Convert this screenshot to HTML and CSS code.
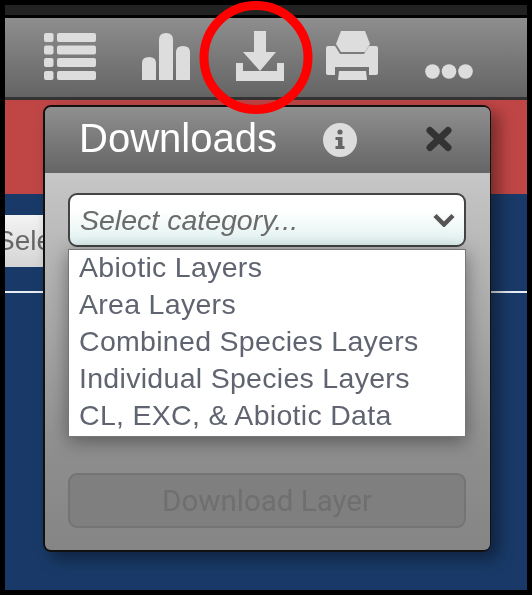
FILE: index.html
```html
<!DOCTYPE html>
<html lang="en">
<head>
    <meta charset="UTF-8">
    <title>Downloads</title>
    <link rel="stylesheet" href="styles.css">
</head>
<body>
    <div class="frame">
        <div class="topstrip"></div>
        <div class="toolbar">
            <svg class="tool list" width="52" height="47" viewBox="0 0 52 47">
                <g fill="#ddd">
                    <rect y="0" width="9.500" height="9" rx="2"/><rect x="13" y="0" width="39" height="9" rx="2"/>
                    <rect y="12.500" width="9.500" height="9" rx="2"/><rect x="13" y="12.500" width="39" height="9" rx="2"/>
                    <rect y="25" width="9.500" height="9" rx="2"/><rect x="13" y="25" width="39" height="9" rx="2"/>
                    <rect y="38" width="9.500" height="9" rx="2"/><rect x="13" y="38" width="39" height="9" rx="2"/>
                </g>
            </svg>
            <svg class="tool chart" width="48" height="47" viewBox="0 0 48 47">
                <g fill="#ddd">
                    <path d="M0 47V30q0-6 7-6t7 6v17z"/>
                    <path d="M17 47V7q0-7 7-7t7 7v40z"/>
                    <path d="M34 47V19q0-6 7-6t7 6v28z"/>
                </g>
            </svg>
            <svg class="tool download-icon" width="48" height="50" viewBox="0 0 48 50">
                <path fill="#ddd" d="M18 0h12v21h10L24 40 7 21h11zM0 32h7v8h34v-8h7v18H0z"/>
            </svg>
            <svg class="tool print" width="52" height="49" viewBox="0 0 52 49">
                <g fill="#ddd">
                    <path d="M15 0h24l5 13-5 8H15l-5-8z"/>
                    <path d="M2 15h7l5 8h24l5-8h7q2 0 2 2v25q0 2-2 2h-7v-8H9v8H2q-2 0-2-2V17q0-2 2-2z"/>
                    <path d="M13 40h27l1 9H12z"/>
                </g>
            </svg>
            <svg class="tool dots" width="48" height="15" viewBox="0 0 48 15">
                <g fill="#ddd"><circle cx="7.500" cy="7.500" r="7.300"/><circle cx="24" cy="7.500" r="7.300"/><circle cx="40.500" cy="7.500" r="7.300"/></g>
            </svg>
        </div>
        <div class="redband"></div>
        <div class="blue">
            <div class="select-btn">Select</div>
            <div class="rule"></div>
        </div>
    </div>

    <div class="panel">
        <div class="panel-head">
            <span class="panel-title">Downloads</span>
            <svg class="info" width="34" height="34" viewBox="0 0 34 34">
                <circle cx="17" cy="17" r="17" fill="#ddd"/>
                <circle cx="17" cy="9" r="2.600" fill="#666"/>
                <path fill="#666" d="M12.500 14h7v9h2v3h-9v-3h2.500v-6h-2.500z"/>
            </svg>
            <svg class="close" width="28" height="26" viewBox="0 0 28 26">
                <path fill="none" stroke="#333" stroke-width="7" stroke-linecap="round" d="M5 4.500l18 17M23 4.500l-18 17"/>
            </svg>
        </div>
        <div class="panel-body">
            <div class="select-box">
                <span>Select category...</span>
                <svg width="22" height="14" viewBox="0 0 22 14">
                    <path fill="none" stroke="#555" stroke-width="4.500" d="M2 2.500l9 9 9-9"/>
                </svg>
            </div>
            <ul class="options">
                <li>Abiotic Layers</li>
                <li>Area Layers</li>
                <li>Combined Species Layers</li>
                <li>Individual Species Layers</li>
                <li>CL, EXC, &amp; Abiotic Data</li>
            </ul>
            <button class="download" disabled>Download Layer</button>
        </div>
    </div>

    <svg class="ring" width="116" height="116" viewBox="0 0 116 116">
        <circle cx="58" cy="57.500" r="52" fill="none" stroke="#f00" stroke-width="9"/>
    </svg>
</body>
</html>
```

FILE: styles.css
```css
html, body {
    margin: 0;
    height: 595px;
    overflow: hidden;
    background: #000;
}
body {
    font-family: "Liberation Sans", Arial, sans-serif;
    position: relative;
}
.frame {
    box-sizing: border-box;
    width: 532px;
    height: 595px;
    padding: 5px;
    background: #000;
    display: flex;
    flex-direction: column;
    filter: blur(0.5px);
}
.topstrip {
    height: 10px;
    background: #222;
    border-bottom: 3px solid #000;
}
.toolbar {
    box-sizing: border-box;
    height: 80px;
    background: linear-gradient(#8e8e8e, #646464);
    border-bottom: 1px solid #333;
    display: flex;
    align-items: flex-start;
    padding: 13px 0 0 39px;
}
.tool { display: block; flex: none; }
.list { margin-top: 2px; }
.chart { margin: 2px 0 0 46px; }
.download-icon { margin-left: 46px; }
.print { margin-left: 42px; }
.dots { margin: 33px 0 0 47px; }
.redband {
    height: 96px;
    background: #c04646;
    border-top: 2px solid #333;
    box-sizing: border-box;
}
.blue {
    flex: 1;
    background: #193a68;
    padding-top: 21px;
}
.select-btn {
    width: 38px;
    height: 52px;
    box-sizing: border-box;
    background: linear-gradient(#f4f4f4, #d4d4d4);
    color: #666;
    font-size: 28px;
    line-height: 52px;
    white-space: nowrap;
    overflow: hidden;
    text-indent: -9px;
}
.rule {
    height: 2px;
    margin-top: 24px;
    background: #e8edf3;
}
.panel {
    position: absolute;
    left: 43px;
    top: 105px;
    width: 448px;
    height: 447px;
    box-sizing: border-box;
    border: 2px solid #111;
    border-right-width: 1px;
    border-bottom-width: 2px;
    border-radius: 8px;
    display: flex;
    flex-direction: column;
    box-shadow: 8px 7px 16px rgba(0, 0, 0, 0.4);
    filter: blur(0.5px);
}
.panel-head {
    height: 66px;
    flex: none;
    background: linear-gradient(#8f8f8f, #656565);
    border-radius: 6px 6px 0 0;
    display: flex;
    align-items: center;
    color: #fff;
}
.panel-title {
    font-size: 40px;
    margin: -3px 0 0 34px;
    width: 244px;
}
.info { margin-top: -1px; }
.close { margin: -2px 0 0 68px; }
.panel-body {
    flex: 1;
    padding: 20px 24px 0 23px;
    border-radius: 0 0 6px 6px;
    background: linear-gradient(#c6c6c6 0, #bbb 60px, #8e8e8e 280px, #858585 100%);
}
.select-box {
    box-sizing: border-box;
    height: 54px;
    border: 2px solid #444;
    border-radius: 9px;
    background: linear-gradient(#fff 30%, #e0f2f0);
    display: flex;
    align-items: center;
    justify-content: space-between;
    padding: 0 9px 0 10px;
    color: #6b6b6b;
    font-size: 28.500px;
    font-style: italic;
}
.options {
    list-style: none;
    margin: 2px 0 0;
    padding: 0 0 4px 10px;
    height: 188px;
    box-sizing: border-box;
    background: #fff;
    border: 1px solid #777;
    box-shadow: 0 4px 18px rgba(0, 0, 0, 0.4);
    color: #5f6470;
    font-size: 28.500px;
}
.options li {
    height: 37px;
    line-height: 35px;
    letter-spacing: 0.3px;
    white-space: nowrap;
}
.download {
    display: block;
    width: 100%;
    height: 55px;
    margin-top: 36px;
    border: 2px solid #747474;
    border-radius: 9px;
    background: #7f7f7f;
    color: #6f6f6f;
    font-family: Roboto, "Liberation Sans", sans-serif;
    font-size: 29.500px;
}
.ring {
    position: absolute;
    left: 198px;
    top: 0;
}
```
